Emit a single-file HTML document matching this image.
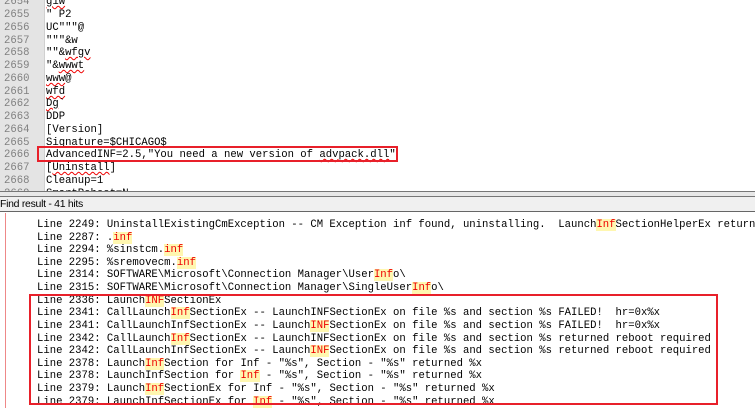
<html><head><style>
body{margin:0;width:755px;height:408px;overflow:hidden;background:#fff;position:relative;font-family:"Liberation Mono",monospace;font-size:10.6px;}
.ed{position:absolute;left:0;top:0;width:755px;height:191px;overflow:hidden;}
.gut{position:absolute;left:0;top:0;width:44px;height:191px;background:#e4e4e4;border-right:1px solid #d0d0d0}
.l{position:absolute;height:13px;line-height:13px;white-space:pre;color:#000;margin-top:2px}
.n{color:#808080;left:4px}
.t{left:46px}
.sq{text-decoration:underline wavy #e00;text-decoration-thickness:1px}
.r{position:absolute;left:37px;white-space:pre;height:13px;line-height:13px;margin-top:3px}
.h{color:#e00;background:#fff7b0}
</style></head><body>
<div class="ed"><div class="gut"></div>
<div class="l n" style="top:-6px">2654</div><div class="l t sq" style="top:-6px">g1w</div>
<div class="l n" style="top:7px">2655</div><div class="l t" style="top:7px">" P2</div>
<div class="l n" style="top:20px">2656</div><div class="l t" style="top:20px">UC"""@</div>
<div class="l n" style="top:33px">2657</div><div class="l t" style="top:33px">"""&amp;w</div>
<div class="l n" style="top:45px">2658</div><div class="l t" style="top:45px">""&amp;<span class="sq">wfgv</span></div>
<div class="l n" style="top:58px">2659</div><div class="l t" style="top:58px">"&amp;<span class="sq">wwwt</span></div>
<div class="l n" style="top:71px">2660</div><div class="l t" style="top:71px"><span class="sq">www</span>@</div>
<div class="l n" style="top:84px">2661</div><div class="l t" style="top:84px"><span class="sq">wfd</span></div>
<div class="l n" style="top:96px">2662</div><div class="l t" style="top:96px"><span class="sq">Dg</span>`</div>
<div class="l n" style="top:109px">2663</div><div class="l t" style="top:109px">DDP</div>
<div class="l n" style="top:122px">2664</div><div class="l t" style="top:122px">[Version]</div>
<div class="l n" style="top:135px">2665</div><div class="l t" style="top:135px">Signature=$CHICAGO$</div>
<div class="l n" style="top:147px">2666</div><div class="l t" style="top:147px">AdvancedINF=2.5,"You need a new version of <span class="sq">advpack.dll</span>"</div>
<div class="l n" style="top:160px">2667</div><div class="l t" style="top:160px">[<span class="sq">Uninstall</span>]</div>
<div class="l n" style="top:173px">2668</div><div class="l t" style="top:173px">Cleanup=1</div>
<div class="l n" style="top:186px">2669</div><div class="l t" style="top:186px">SmartReboot=N</div>
<div style="position:absolute;left:37px;top:146px;width:357px;height:12px;border:2px solid #e8202a"></div>
</div>
<div style="position:absolute;left:0;top:191px;width:755px;height:4px;background:#e8e8e8;border-top:1px solid #777;border-bottom:1px solid #777"></div>
<div style="position:absolute;left:0;top:197px;width:755px;height:14px;background:#f0f0f0;border-bottom:1px solid #666;font-family:'Liberation Sans',sans-serif;font-size:10.5px;line-height:14px;letter-spacing:-0.3px">Find result - 41 hits</div>
<div style="position:absolute;left:5px;top:213px;width:1px;height:195px;background:#e88"></div>
<div class="r" style="top:216px">Line 2249: UninstallExistingCmException -- CM Exception inf found, uninstalling.  Launch<span class="h">Inf</span>SectionHelperEx return</div>
<div class="r" style="top:229px">Line 2287: .<span class="h">inf</span></div>
<div class="r" style="top:241px">Line 2294: %sinstcm.<span class="h">inf</span></div>
<div class="r" style="top:254px">Line 2295: %sremovecm.<span class="h">inf</span></div>
<div class="r" style="top:266px">Line 2314: SOFTWARE\Microsoft\Connection Manager\User<span class="h">Inf</span>o\</div>
<div class="r" style="top:279px">Line 2315: SOFTWARE\Microsoft\Connection Manager\SingleUser<span class="h">Inf</span>o\</div>
<div class="r" style="top:292px">Line 2336: Launch<span class="h">INF</span>SectionEx</div>
<div class="r" style="top:304px">Line 2341: CallLaunch<span class="h">Inf</span>SectionEx -- LaunchINFSectionEx on file %s and section %s FAILED!  hr=0x%x</div>
<div class="r" style="top:317px">Line 2341: CallLaunchInfSectionEx -- Launch<span class="h">INF</span>SectionEx on file %s and section %s FAILED!  hr=0x%x</div>
<div class="r" style="top:330px">Line 2342: CallLaunch<span class="h">Inf</span>SectionEx -- LaunchINFSectionEx on file %s and section %s returned reboot required</div>
<div class="r" style="top:342px">Line 2342: CallLaunchInfSectionEx -- Launch<span class="h">INF</span>SectionEx on file %s and section %s returned reboot required</div>
<div class="r" style="top:355px">Line 2378: Launch<span class="h">Inf</span>Section for Inf - "%s", Section - "%s" returned %x</div>
<div class="r" style="top:367px">Line 2378: LaunchInfSection for <span class="h">Inf</span> - "%s", Section - "%s" returned %x</div>
<div class="r" style="top:380px">Line 2379: Launch<span class="h">Inf</span>SectionEx for Inf - "%s", Section - "%s" returned %x</div>
<div class="r" style="top:393px">Line 2379: LaunchInfSectionEx for <span class="h">Inf</span> - "%s", Section - "%s" returned %x</div>
<div style="position:absolute;left:29px;top:294px;width:685px;height:107px;border:2px solid #e8202a"></div>
</body></html>
